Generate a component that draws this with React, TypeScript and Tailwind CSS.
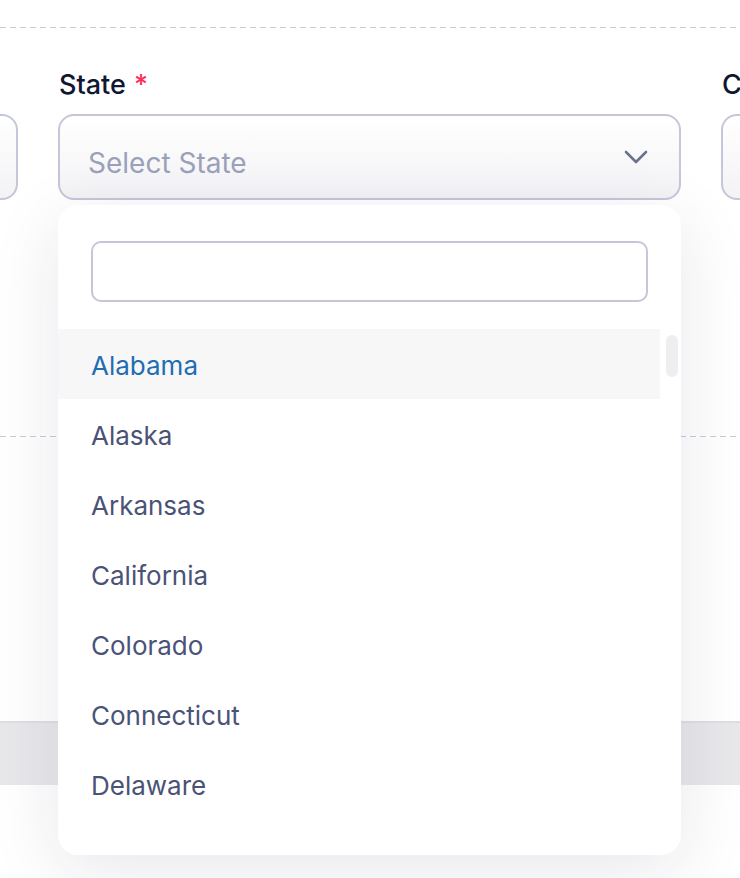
import React from 'react';

const states = ['Alabama', 'Alaska', 'Arkansas', 'California', 'Colorado', 'Connecticut', 'Delaware'];

const Dashed = () => (
  <div className="h-px w-full bg-[repeating-linear-gradient(90deg,#c9cadb_0_6px,transparent_6px_10px)]" />
);

const FieldBox = ({ children }: { children?: React.ReactNode }) => (
  <div className="h-[86px] w-[623px] shrink-0 rounded-[16px] border-2 border-[#c4c7da] bg-linear-to-b from-white to-[#f3f3f6]">
    {children}
  </div>
);

export default function App() {
  return (
    <div
      className="relative h-[878px] w-[740px] overflow-hidden bg-white"
      style={{ fontFamily: 'Inter, "Noto Sans", sans-serif' }}
    >
      <div className="h-[27px]" />
      <Dashed />

      <div className="ml-[-605px] flex gap-[40px] pt-[38px]">
        <div className="w-[623px] shrink-0">
          <div className="h-[34px]" />
          <div className="mt-[14px]">
            <FieldBox />
          </div>
        </div>
        <div className="w-[623px] shrink-0">
          <div className="flex h-[34px] items-center pl-px pt-[3px] text-[27px] font-medium leading-none text-[#0f1733]">
            State <span className="ml-[8px] text-[#ff2d5a]">*</span>
          </div>
          <div className="mt-[14px]">
            <FieldBox>
              <div className="flex h-full items-center justify-between pl-[28px] pr-[31px]">
                <span className="pt-[11px] text-[28px] leading-none text-[#9ba1b8]">Select State</span>
                <svg width="24" height="14" viewBox="0 0 24 14" fill="none">
                  <path d="M2 2l10 10 10-10" stroke="#6b7290" strokeWidth="2.6" strokeLinecap="round" strokeLinejoin="round" />
                </svg>
              </div>
            </FieldBox>
          </div>
        </div>
        <div className="w-[623px] shrink-0">
          <div className="flex h-[34px] items-center pl-px pt-[3px] text-[27px] font-medium leading-none text-[#0f1733]">
            C
          </div>
          <div className="mt-[14px]">
            <FieldBox />
          </div>
        </div>
      </div>

      <div className="h-[236px]" />
      <Dashed />
      <div className="h-[284px]" />
      <div className="h-[64px] border-t-2 border-[#dedee3] bg-[#e8e8eb]" />

      <div className="absolute left-[58px] top-[205px] flex h-[650px] w-[623px] flex-col rounded-[20px] bg-white shadow-[0_16px_70px_rgba(30,32,70,0.1)]">
        <div className="px-[33px] pt-[36px]">
          <div className="h-[61px] w-full rounded-[10px] border-2 border-[#c4c7da] bg-white" />
        </div>
        <div className="relative mt-[27px] flex-1 overflow-hidden">
          {states.map((s, i) => (
            <div
              key={s}
              className={
                i === 0
                  ? 'flex h-[70px] w-[602px] items-center bg-[#f7f7f8] pl-[33px] pt-[2px] text-[26px] text-[#1f6db3]'
                  : 'flex h-[70px] w-[602px] items-center pl-[33px] pt-[2px] text-[26px] text-[#4a5377]'
              }
            >
              {s}
            </div>
          ))}
          <div className="absolute right-[3px] top-[6px] h-[42px] w-[12px] rounded-full bg-[#eeeef1]" />
        </div>
      </div>
    </div>
  );
}
